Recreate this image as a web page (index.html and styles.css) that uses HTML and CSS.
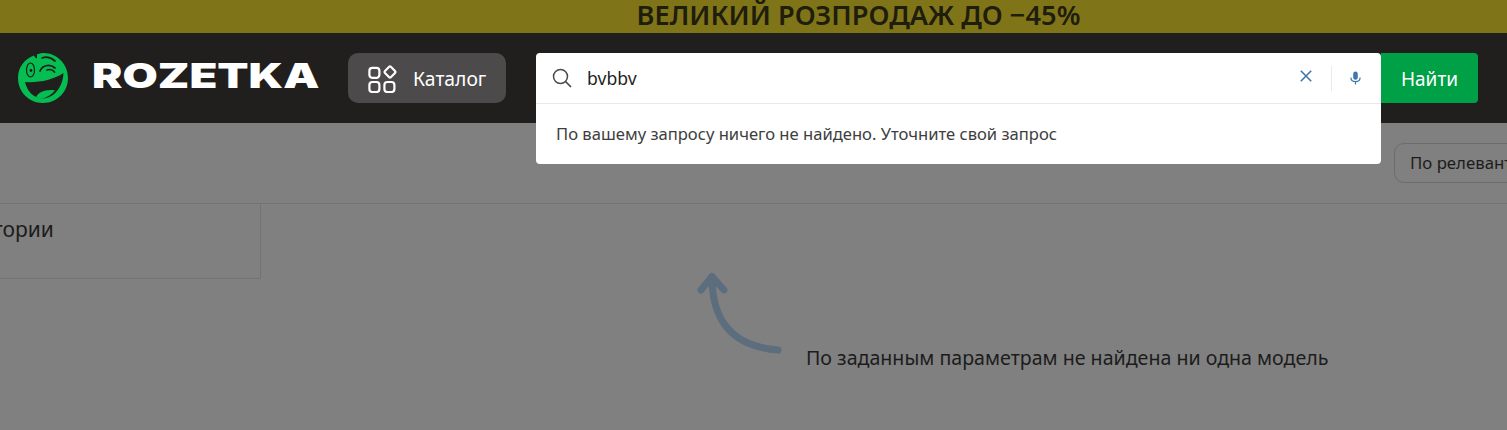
FILE: index.html
```html
<!DOCTYPE html>
<html lang="en">
<head>
    <meta charset="UTF-8">
    <title>Rozetka</title>
    <link rel="stylesheet" href="styles.css">
</head>
<body>
<div class="promo">ВЕЛИКИЙ РОЗПРОДАЖ ДО −45%</div>
<header class="header">
    <a class="logo" href="#">
        <svg class="logo-icon" viewBox="0 0 50 50" width="50" height="50">
            <path d="M19 1.2C22 .3 24 0 25.500 0 39 0 50 11 50 25S39 50 25 50 0 39 0 25C0 14 6.500 6 16 2.500 16.500 4 17.500 5 19 5.500Z" fill="#06bd52"/>
            <path d="M7 29C20 30 35 27 45.500 20 45 34 36 45 25 45.500 15 45 9 38 7 29Z" fill="#201f1d"/>
            <path d="M18 44.500C20 39 28 36 37 37.500 34 41 30 44 25 45.500 22 45.500 20 45 18 44.500Z" fill="#06bd52"/>
            <ellipse cx="12.500" cy="17" rx="4" ry="7" fill="none" stroke="#201f1d" stroke-width="1.200"/>
            <circle cx="13" cy="17.500" r="1.400" fill="#201f1d"/>
            <path d="M22 18C24 13 31 10 37 15M24 5C28 3.500 33 4.500 37 8M29 17C32 16 35 17 36.500 19" fill="none" stroke="#201f1d" stroke-width="1.700" stroke-linecap="round"/>
        </svg>
        <span class="logo-text">ROZETKA</span>
    </a>
    <button class="catalog">
        <svg class="catalog-icon" viewBox="0 0 30 30" width="30" height="30">
            <g fill="none" stroke="#fff" stroke-width="2.200">
                <rect x="1.400" y="4.800" width="10" height="10" rx="3"/>
                <rect x="1.400" y="19" width="10" height="10" rx="3"/>
                <rect x="16.400" y="19" width="10" height="10" rx="3"/>
                <rect x="17.700" y="4.700" width="8.600" height="8.600" rx="1.500" transform="rotate(45 22 9)"/>
            </g>
        </svg>
        <span class="catalog-label">Каталог</span>
    </button>
    <div class="search">
        <div class="search-box">
            <div class="search-row">
                <svg class="search-icon" viewBox="0 0 20 20" width="20" height="20">
                    <circle cx="8.500" cy="8.500" r="7" fill="none" stroke="#4a4a4a" stroke-width="1.500"/>
                    <path d="M13.500 13.500L19 19" stroke="#4a4a4a" stroke-width="1.700"/>
                </svg>
                <span class="search-value">bvbbv</span>
                <svg class="clear-icon" viewBox="0 0 12 12" width="12" height="12">
                    <path d="M.8 .8L11.200 11.200M11.200 .8L.8 11.200" stroke="#3e77aa" stroke-width="1.600"/>
                </svg>
                <span class="search-divider"></span>
                <svg class="mic-icon" viewBox="0 0 12 14" width="11" height="14">
                    <rect x="3.500" y="0" width="5" height="9" rx="2.500" fill="#3e77aa"/>
                    <path d="M1 6.500C1 9.500 3 11 6 11S11 9.500 11 6.500M6 11V14" fill="none" stroke="#3e77aa" stroke-width="1.300"/>
                </svg>
            </div>
            <div class="search-empty">По вашему запросу ничего не найдено. Уточните свой запрос</div>
        </div>
        <button class="search-btn">Найти</button>
    </div>
</header>
<div class="sort-bar">
    <div class="sort">По релевантности</div>
</div>
<main class="content">
    <aside class="sidebar">
        <div class="sidebar-title">Категории</div>
    </aside>
    <div class="empty">
        <svg class="empty-arrow" viewBox="0 0 86 84" width="86" height="84">
            <path d="M15 7C15 45 30 76 81 80M4 20L15 6.500 27 20" fill="none" stroke="#5c6d7d" stroke-width="7" stroke-linecap="round" stroke-linejoin="round"/>
        </svg>
        <p class="empty-text">По заданным параметрам не найдена ни одна модель</p>
    </div>
</main>
</body>
</html>
```

FILE: styles.css
```css
* {
    margin: 0;
    padding: 0;
    box-sizing: border-box;
}

html,
body {
    height: 430px;
    overflow: hidden;
}

body {
    background-color: #808080;
    font-family: "Noto Sans", "Open Sans", sans-serif;
    color: #1c1c1c;
}

button {
    border: 0;
    font-family: inherit;
    cursor: pointer;
}

.promo {
    height: 33px;
    padding-left: 210px;
    background-color: #7f7518;
    color: #1f1d0c;
    font-size: 27.2px;
    font-weight: 600;
    line-height: 29px;
    text-align: center;
}

.header {
    display: flex;
    align-items: flex-start;
    height: 90px;
    padding: 20px 29px 0 18px;
    background-color: #201f1d;
}

.logo {
    display: flex;
    align-items: center;
    width: 330px;
    height: 50px;
    color: #fff;
    text-decoration: none;
}

.logo-icon {
    flex: none;
}

.logo-text {
    display: inline-block;
    margin: 0 0 4px 24px;
    font-family: Inter, sans-serif;
    font-size: 34px;
    font-weight: 900;
    line-height: 46px;
    transform: scaleX(1.34);
    transform-origin: left center;
}

.catalog {
    display: flex;
    align-items: center;
    gap: 16px;
    width: 158px;
    height: 50px;
    margin-right: 30px;
    padding-left: 20px;
    border-radius: 10px;
    background-color: #4c4a4b;
    color: #fff;
    font-size: 19.3px;
}

.catalog-label {
    margin: 1px 0 0 -1px;
}

.search {
    flex: 1;
    display: flex;
    align-items: flex-start;
}

.search-box {
    flex: 1;
    height: 111px;
    border-radius: 4px;
    background-color: #fff;
}

.search-row {
    display: flex;
    align-items: center;
    height: 51px;
    padding: 0 20px 0 16px;
    border-bottom: 1px solid #e9e9e9;
}

.search-value {
    flex: 1;
    margin-left: 15px;
    font-size: 17.6px;
    color: #221f1f;
}

.clear-icon {
    margin-bottom: 4px;
}

.search-divider {
    width: 1px;
    height: 25px;
    margin: 0 18px 0 19px;
    background-color: #e9e9e9;
}

.search-empty {
    padding: 19px 20px 0;
    font-size: 16.6px;
    line-height: 22px;
    color: #3e3e3e;
}

.search-btn {
    width: 97px;
    height: 50px;
    padding-top: 2px;
    border-radius: 0 4px 4px 0;
    background-color: #00a046;
    color: #fff;
    font-size: 19px;
}

.sort-bar {
    display: flex;
    justify-content: flex-end;
    height: 81px;
    padding-top: 20px;
    border-bottom: 1px solid #737373;
    overflow: hidden;
}

.sort {
    flex: none;
    width: 200px;
    height: 40px;
    margin-right: -87px;
    padding-left: 15px;
    border: 1px solid #6c6c6c;
    border-radius: 10px;
    font-size: 16.8px;
    line-height: 38px;
    white-space: nowrap;
}

.content {
    display: flex;
    align-items: flex-start;
}

.sidebar {
    flex: none;
    width: 261px;
    height: 75px;
    padding-top: 12px;
    border-right: 1px solid #737373;
    border-bottom: 1px solid #737373;
}

.sidebar-title {
    margin-left: -52px;
    font-size: 21px;
    line-height: 26px;
}

.empty {
    display: flex;
    margin: 66px 0 0 436px;
}

.empty-arrow {
    flex: none;
}

.empty-text {
    margin: 75px 0 0 23px;
    font-size: 19.6px;
    line-height: 26px;
    white-space: nowrap;
}
```
